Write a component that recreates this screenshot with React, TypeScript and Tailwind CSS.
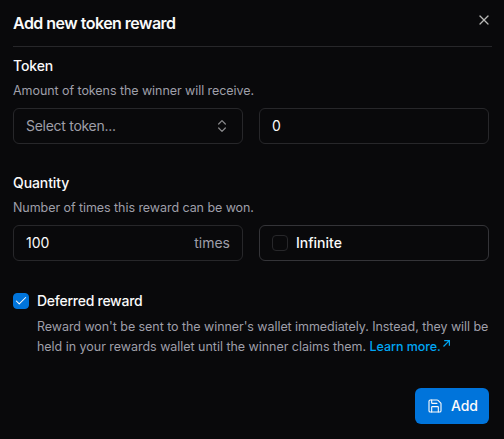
import { useState } from "react";
import type { ReactNode } from "react";
import { Check, ChevronsUpDown, Save, X } from "lucide-react";

function Field({
  label,
  description,
  children,
}: {
  label: string;
  description: string;
  children: ReactNode;
}) {
  return (
    <section className="flex flex-col">
      <h3 className="text-sm leading-5 font-medium tracking-[-0.1px]">{label}</h3>
      <p className="mt-[5px] mb-[7px] text-[12.5px] leading-5 tracking-[-0.06px] text-zinc-400">{description}</p>
      <div className="grid grid-cols-2 gap-4">{children}</div>
    </section>
  );
}

function Checkbox({
  checked,
  onChange,
  label,
}: {
  checked: boolean;
  onChange: (value: boolean) => void;
  label: string;
}) {
  return (
    <button
      type="button"
      role="checkbox"
      aria-checked={checked}
      aria-label={label}
      onClick={() => onChange(!checked)}
      className={`flex size-4 shrink-0 items-center justify-center rounded-sm border ${
        checked ? "border-[#0074db] bg-[#0074db]" : "border-zinc-800"
      }`}
    >
      {checked && <Check className="size-[14px] shrink-0" strokeWidth={1.8} />}
    </button>
  );
}

export default function App() {
  const [amount, setAmount] = useState("0");
  const [quantity, setQuantity] = useState("100");
  const [infinite, setInfinite] = useState(false);
  const [deferred, setDeferred] = useState(true);

  return (
    <div className="flex h-[439px] w-[504px] flex-col bg-[#09090b] pl-[13px] font-['Inter',sans-serif] text-zinc-50">
      <header className="mr-3 flex h-[47px] items-center justify-between border-b border-zinc-800">
        <h2 className="text-base leading-6 font-semibold tracking-[-0.52px]">Add new token reward</h2>
        <button type="button" aria-label="Close" className="mb-[6px] text-[#b8b8b6]">
          <X className="size-4" strokeWidth={1.9} />
        </button>
      </header>

      <main className="mr-[15px] flex flex-col pt-[9px]">
        <Field label="Token" description="Amount of tokens the winner will receive.">
          <button
            type="button"
            className="flex h-9 items-center justify-between rounded-md border border-zinc-800 px-3 text-sm tracking-[-0.28px] text-zinc-400"
          >
            Select token...
            <ChevronsUpDown className="size-4 text-[#89898b]" strokeWidth={1.9} />
          </button>
          <input
            value={amount}
            onChange={(e) => setAmount(e.target.value)}
            className="h-9 min-w-0 rounded-md border border-zinc-800 px-3 pb-px text-sm outline-none"
          />
        </Field>

        <div className="mt-[29px]">
          <Field label="Quantity" description="Number of times this reward can be won.">
            <div className="flex h-9 items-center rounded-md border border-zinc-800 px-3 text-sm">
              <input
                value={quantity}
                onChange={(e) => setQuantity(e.target.value)}
                className="min-w-0 flex-1 outline-none"
              />
              <span className="text-zinc-400">times</span>
            </div>
            <div className="flex h-9 items-center gap-2 rounded-md border border-[#343438] px-3 text-sm font-medium">
              <Checkbox checked={infinite} onChange={setInfinite} label="Infinite" />
              Infinite
            </div>
          </Field>
        </div>

        <div className="mt-[30px] flex items-center gap-2 text-sm leading-5 font-medium tracking-[-0.26px]">
          <Checkbox checked={deferred} onChange={setDeferred} label="Deferred reward" />
          Deferred reward
        </div>
        <p className="mt-[6px] pl-6 text-[12.5px] leading-5 tracking-[-0.06px] whitespace-nowrap text-zinc-400">
          Reward won't be sent to the winner's wallet immediately. Instead, they will be
          <br />
          <span className="tracking-[-0.03px]">held in your rewards wallet until the winner claims them. </span>
          <a href="#" className="font-medium text-[#00a6f4]">
            Learn more.
            <svg viewBox="0 0 7 7" className="mb-[8px] ml-[2px] inline size-[7px]" fill="none" stroke="currentColor" strokeWidth={1.2}>
              <path d="M.5 6.5 6.3.7M1.2.6h5.2v5.2" />
            </svg>
          </a>
        </p>
        <button
          type="button"
          className="mt-[31px] flex h-9 w-[74px] items-center justify-center gap-2 self-end rounded-md bg-[#0074db] pl-px text-sm font-medium tracking-[-0.1px]"
        >
          <Save className="size-4" strokeWidth={1.7} />
          Add
        </button>
      </main>
    </div>
  );
}
